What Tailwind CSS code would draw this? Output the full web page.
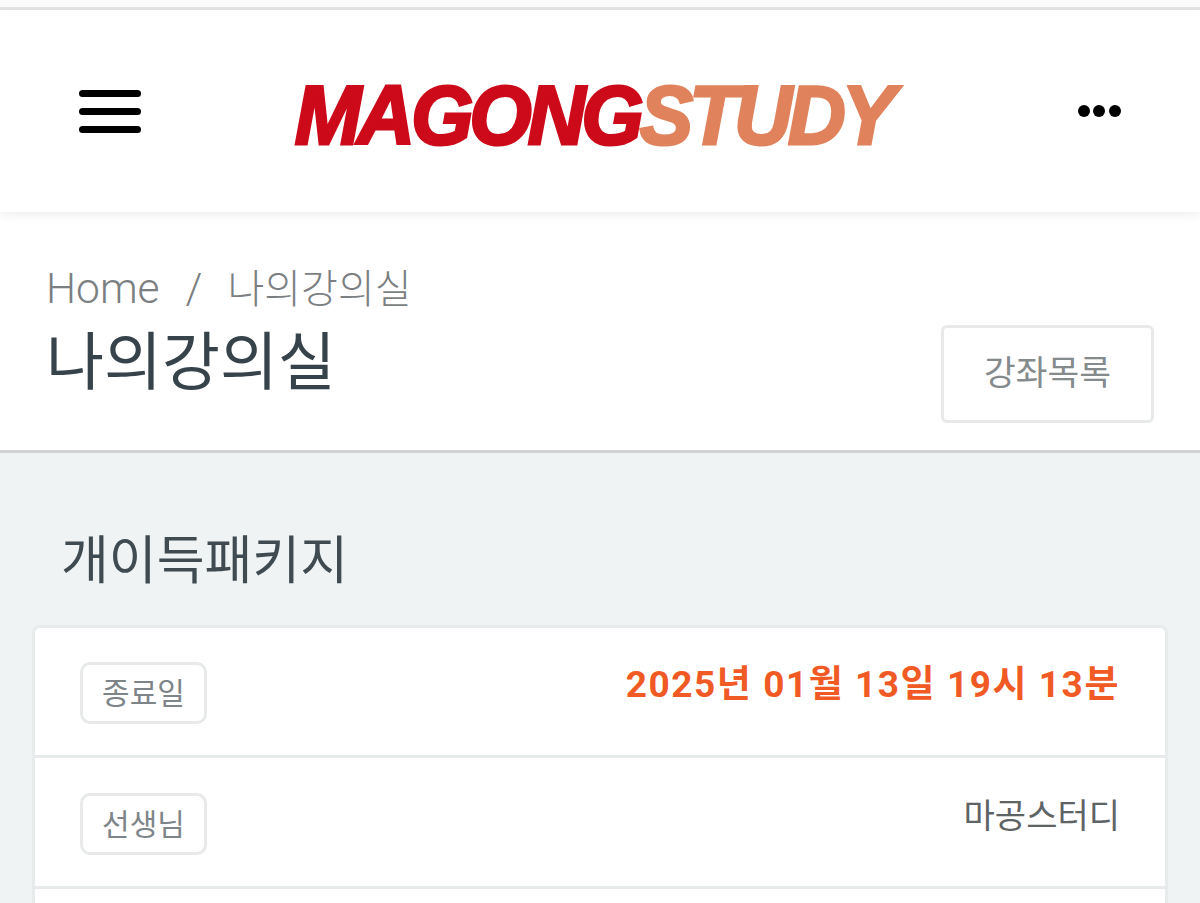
<!DOCTYPE html>
<html lang="ko">

<head>
    <meta charset="UTF-8" />
    <meta name="viewport" content="width=device-width, initial-scale=1.0" />
    <title>나의강의실</title>
    <script src="https://cdn.jsdelivr.net/npm/@tailwindcss/browser@4"></script>
</head>

<body class="bg-[#eff3f4] h-[903px] overflow-hidden font-['Roboto','Noto_Sans_CJK_KR',sans-serif]">

    <!-- status strip -->
    <div class="h-[10px] bg-[#fbfbfb] border-b-[3px] border-[#e4e4e4]"></div>

    <!-- header -->
    <header class="relative z-10 h-[202px] bg-white flex items-center justify-between pl-[79px] pr-[79px] shadow-[0_3px_10px_rgba(0,0,0,0.07)]">
        <div class="flex flex-col gap-[11px] w-[62px]">
            <span class="block h-[7px] rounded-full bg-black"></span>
            <span class="block h-[7px] rounded-full bg-black"></span>
            <span class="block h-[7px] rounded-full bg-black"></span>
        </div>
        <div class="font-['Liberation_Sans',sans-serif] font-bold italic text-[84px] leading-none tracking-[-4px] whitespace-nowrap text-[#cc0a1a] [-webkit-text-stroke:3px_#cc0a1a] scale-x-[0.95] mt-[8px] -ml-[13px]">MAGONG<span class="text-[#e0825c] [-webkit-text-stroke:3px_#e0825c]">STUDY</span></div>
        <div class="flex justify-end gap-[3.5px] w-[62px] -mt-[1px]">
            <span class="block w-[12px] h-[12px] rounded-full bg-black"></span>
            <span class="block w-[12px] h-[12px] rounded-full bg-black"></span>
            <span class="block w-[12px] h-[12px] rounded-full bg-black"></span>
        </div>
    </header>

    <!-- page title -->
    <section class="h-[241px] bg-white border-b-[3px] border-[#d0d2d3] pl-[46px] pr-[46px] flex justify-between">
        <div class="pt-[50px]">
            <div class="flex items-center h-[54px] text-[42.5px] font-light text-[#7b7f82]">
                <span>Home</span>
                <span class="ml-[26px] mr-[25px]">/</span>
                <span class="text-[40px] pt-[1px]">나의강의실</span>
            </div>
            <h1 class="mt-[7px] text-[63px] leading-[80px] font-normal text-[#37434b]">나의강의실</h1>
        </div>
        <button class="mt-[113px] w-[213px] h-[98px] bg-white border-[3px] border-[#e7e9ea] rounded-[6px] text-[34.5px] text-[#858a8d]">강좌목록</button>
    </section>

    <!-- package -->
    <main class="pl-[32px] pr-[32px]">
        <h2 class="pt-[72px] pl-[29px] h-[172px] text-[52px] leading-[74px] font-normal text-[#3f4a51]">개이득패키지</h2>
        <div class="bg-white border-[3px] border-[#e8ebec] rounded-[8px]">
            <div class="h-[130px] pl-[45px] pr-[45px] pt-[34px] flex justify-between items-start border-b-[3px] border-[#e8ebec]">
                <span class="w-[127px] h-[62px] flex items-center justify-center border-[3px] border-[#e7e9ea] rounded-[10px] text-[30px] text-[#7e8589]">종료일</span>
                <span class="text-[37px] leading-[46px] font-bold tracking-[1.55px] text-[#f15a24]">2025년 01월 13일 19시 13분</span>
            </div>
            <div class="h-[131px] pl-[45px] pr-[45px] pt-[35px] flex justify-between items-start border-b-[3px] border-[#e8ebec]">
                <span class="w-[127px] h-[62px] flex items-center justify-center border-[3px] border-[#e7e9ea] rounded-[10px] text-[30px] text-[#7e8589]">선생님</span>
                <span class="text-[34px] leading-[46px] text-[#5e6366]">마공스터디</span>
            </div>
            <div class="h-[60px]"></div>
        </div>
    </main>

</body>

</html>
